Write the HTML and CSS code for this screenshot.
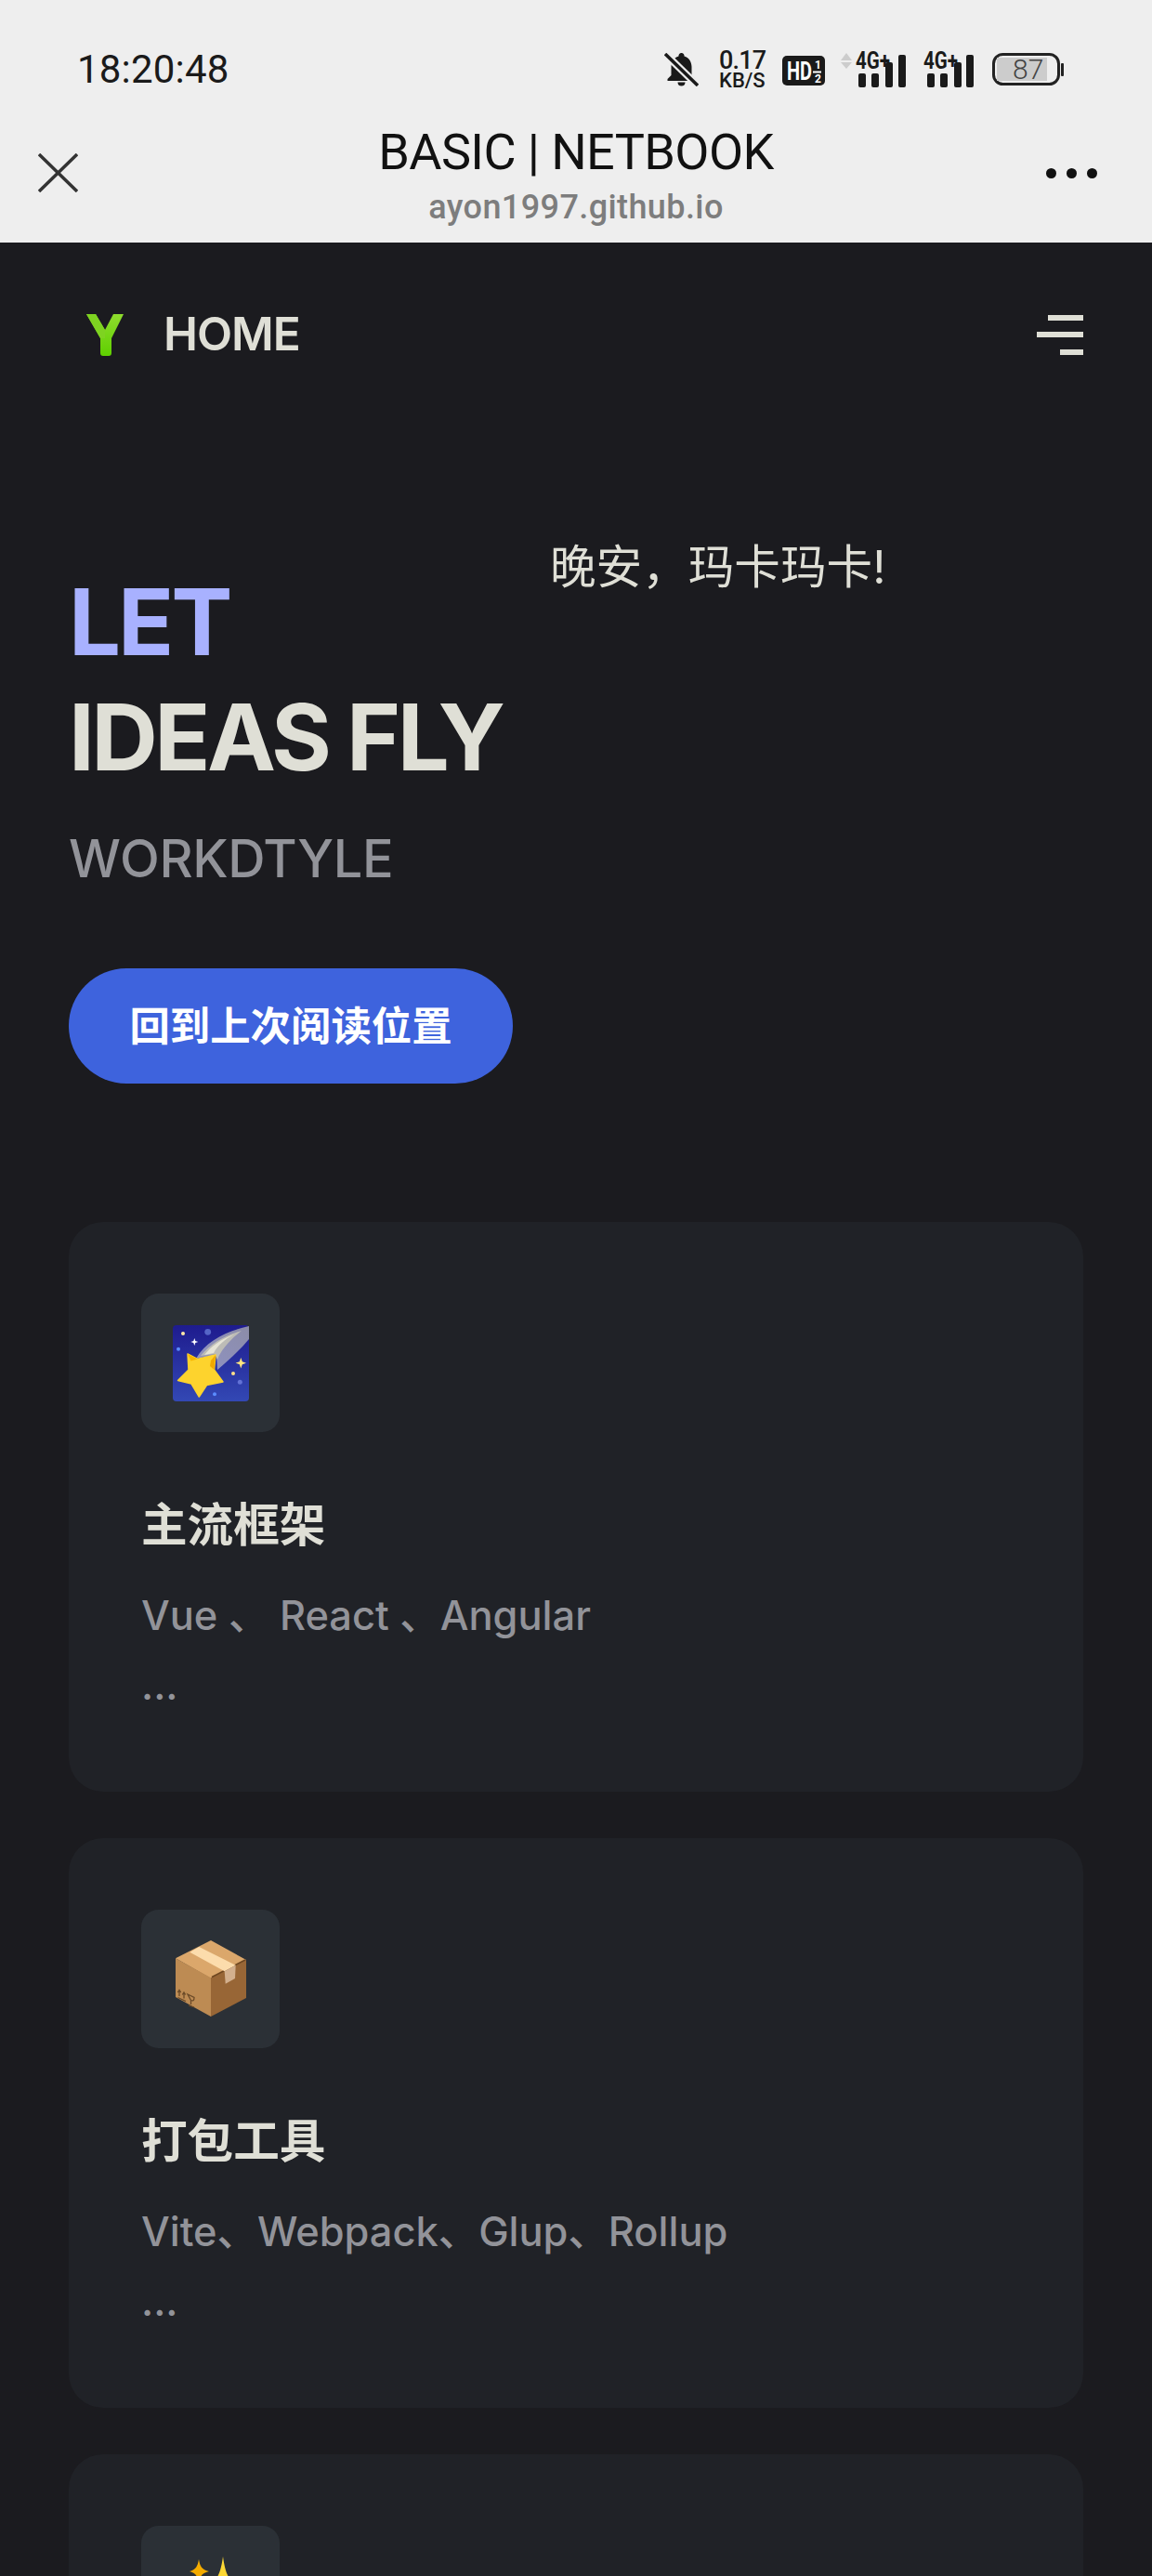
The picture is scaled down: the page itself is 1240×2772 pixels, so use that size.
FILE: index.html
```html
<!DOCTYPE html>
<html lang="zh-CN">
<head>
  <meta charset="UTF-8" />
  <meta name="viewport" content="width=device-width, initial-scale=1.0"/>
  <title>BASIC | NETBOOK</title>
  <link rel="stylesheet" href="styles.css">
</head>
<body>

<div class="browser-top">
  <div class="status-bar">
    <span class="clock">18:20:48</span>
    <div class="status-icons">
      <svg class="bell" width="37" height="36" viewBox="0 0 37 36">
        <path d="M18.5 0a3 3 0 0 1 3 3.4C27 5 29.5 10 29.5 15v9l4 4v2h-30v-2l4-4v-9c0-5 2.500-10 8-11.600A3 3 0 0 1 18.500 0zM14.500 31.500h8a4 4 0 0 1-8 0z" fill="#1a1a1a"/>
        <path d="M1 1l35 34" stroke="#eee" stroke-width="8"/>
        <path d="M1 1l35 34" stroke="#1a1a1a" stroke-width="3.500"/>
      </svg>
      <div class="speed">
        <span class="speed-num">0.17</span>
        <span class="speed-unit">KB/S</span>
      </div>
      <svg class="hd" width="46" height="32" viewBox="0 0 46 32">
        <rect width="46" height="32" rx="5" fill="#1a1a1a"/>
        <text x="5" y="26" class="hd-big" textLength="27" lengthAdjust="spacingAndGlyphs">HD</text>
        <text x="35" y="14" class="hd-small">1</text>
        <rect x="33" y="16.500" width="9" height="2" fill="#fff"/>
        <text x="35" y="29" class="hd-small">2</text>
      </svg>
      <svg class="signal signal-a" width="70" height="44" viewBox="0 -6 70 44">
        <path d="M0 9h12L6 1zM0 11h12L6 18z" fill="#ccc"/>
        <text x="16" y="18" class="net" textLength="37" lengthAdjust="spacingAndGlyphs">4G+</text>
        <rect x="19" y="23" width="8" height="15" rx="2"/>
        <rect x="33" y="23" width="8" height="15" rx="2"/>
        <rect x="48" y="11" width="8" height="27" rx="2"/>
        <rect x="62" y="3" width="8" height="35" rx="2"/>
      </svg>
      <svg class="signal signal-b" width="54" height="44" viewBox="0 -6 54 44">
        <text x="0" y="18" class="net" textLength="37" lengthAdjust="spacingAndGlyphs">4G+</text>
        <rect x="4" y="23" width="8" height="15" rx="2"/>
        <rect x="18" y="23" width="8" height="15" rx="2"/>
        <rect x="33" y="11" width="8" height="27" rx="2"/>
        <rect x="46" y="3" width="8" height="35" rx="2"/>
      </svg>
      <svg class="battery" width="77" height="35" viewBox="0 0 77 35">
        <rect x="1.500" y="1.500" width="70" height="32" rx="10" fill="none" stroke="#222" stroke-width="3"/>
        <rect x="5" y="5" width="54" height="25" fill="#ccc"/>
        <text x="22" y="28" class="batt-num">87</text>
        <rect x="74" y="11" width="3" height="14" rx="1" fill="#222"/>
      </svg>
    </div>
  </div>
  <div class="title-bar">
    <svg class="close" width="43" height="42" viewBox="0 0 43 42">
      <path d="M1 1l41 40M42 1L1 41" stroke="#333" stroke-width="3.500" fill="none"/>
    </svg>
    <div class="title-text">
      <div class="page-title">BASIC | NETBOOK</div>
      <div class="page-url">ayon1997.github.io</div>
    </div>
    <div class="more"><i></i><i></i><i></i></div>
  </div>
</div>

<nav class="nav">
  <a class="brand">
    <svg width="42" height="45" viewBox="0 0 42 45">
      <defs>
        <linearGradient id="ygreen" x1="0" y1="0" x2="0" y2="1">
          <stop offset="0" stop-color="#8fdc2e"/>
          <stop offset="1" stop-color="#5fd000"/>
        </linearGradient>
      </defs>
      <path d="M1 0h10l10 17 9-17h11L28 26v16q0 3-3 3h-6q-3 0-3-3V26z" fill="url(#ygreen)"/>
      <path d="M1 0h10l10 17v9h-5z" fill="#7ed321"/>
    </svg>
    <span class="brand-name">HOME</span>
  </a>
  <div class="burger"><i class="b1"></i><i class="b2"></i><i class="b3"></i></div>
</nav>

<section class="hero">
  <p class="greeting">晚安，玛卡玛卡!</p>
  <h1 class="hero-name">LET</h1>
  <p class="hero-text">IDEAS FLY</p>
  <p class="hero-tag">WORKDTYLE</p>
  <a class="hero-btn">回到上次阅读位置</a>
</section>

<section class="features">
  <article class="card">
    <div class="icon-box">
      <svg width="82" height="82" viewBox="0 0 82 82">
        <defs>
          <linearGradient id="night" x1="0" y1="0" x2="0" y2="1">
            <stop offset="0" stop-color="#1e1b8e"/>
            <stop offset="1" stop-color="#3348b4"/>
          </linearGradient>
          <linearGradient id="trail" x1="1" y1="0" x2="0" y2="1">
            <stop offset="0" stop-color="#8c8ca8"/>
            <stop offset="1" stop-color="#8f93c4"/>
          </linearGradient>
        </defs>
        <rect width="82" height="82" rx="4" fill="url(#night)"/>
        <path d="M82 1C60 6 36 16 25 36l22-4 1 16C60 38 72 27 82 15z" fill="url(#trail)"/>
        <path d="M74 6C56 11 40 20 30 33l15-2 3 6c4-10 12-20 26-31z" fill="#bdbcb6"/>
        <path d="M66 10C52 15 42 22 34 32l10-2c4-8 12-15 22-20z" fill="#e6e4d6"/>
        <circle cx="11" cy="9" r="2" fill="#ffe9a8"/>
        <circle cx="37.700" cy="7.300" r="3.400" fill="#5565c7"/>
        <circle cx="6" cy="25.700" r="2" fill="#5a8cff"/>
        <circle cx="65" cy="52" r="2" fill="#ffe08a"/>
        <circle cx="72.300" cy="61.300" r="2.500" fill="#6272d6"/>
        <circle cx="45" cy="74.300" r="2" fill="#5a8cff"/>
        <path d="M23.300 14l1 3 3 1-3 1-1 3-1-3-3-1 3-1z" fill="#fff"/>
        <path d="M73.300 35l1.500 4.200 4.200 1.500-4.200 1.500-1.500 4.200-1.500-4.200-4.200-1.500 4.200-1.500z" fill="#ffe680"/>
        <path d="M16 31l10.500 5.500L46 32l-1.500 16L54 61l-17.500 3.500L28.300 77 20 63 5.500 59.500 17 48z" fill="#fdd32d" stroke="#fdd32d" stroke-width="1.500" stroke-linejoin="round"/>
        <path d="M46 32l-1.500 16-4.500-4 1-6z" fill="#f0a800"/>
        <path d="M16 31l10.500 5.500-7 2z" fill="#f7b500"/>
      </svg>
    </div>
    <h2 class="card-title">主流框架</h2>
    <p class="card-desc">Vue 、 React 、Angular<br>...</p>
  </article>

  <article class="card">
    <div class="icon-box">
      <svg width="76" height="82" viewBox="0 0 76 82">
        <path d="M38 0l38 21-38 20L0 19.300z" fill="#dba76b"/>
        <path d="M0 19.300l38 21V82L0 61z" fill="#bd8b53"/>
        <path d="M38 40.300L76 21v41L38 82z" fill="#986636"/>
        <path d="M39 39.500L75 21" stroke="#6e4620" stroke-width="1.500"/>
        <path d="M15.300 12.700L25.300 7l39.400 19.700-12 6.600z" fill="#fcdcac"/>
        <path d="M52.700 33.300l12-6.600-.7 14.300-10.300 5.700z" fill="#d3b08e"/>
        <g stroke="#6b4a28" stroke-width="1.300" fill="none">
          <path d="M4 60V54M2.300 56L4 53.500 5.700 56M9 62.500V56.500M7.300 58.500L9 56 10.700 58.500M2.500 61.500L11 65.500"/>
          <path d="M13 58l7 3.500c0 3-1 4-3.500 3zM16.500 65v4M14 70l6 2"/>
        </g>
      </svg>
    </div>
    <h2 class="card-title">打包工具</h2>
    <p class="card-desc">Vite、Webpack、Glup、Rollup<br>...</p>
  </article>

  <article class="card">
    <div class="icon-box">
      <svg width="82" height="82" viewBox="0 0 82 82">
        <path d="M28 3c1.500 8 3 11 11 13-8 2-9.500 5-11 13-1.500-8-3-11-10-13 7-2 8.500-5 10-13z" fill="#f5ac00"/>
        <path d="M54 0c3 22 8 30 24 34-16 4-21 12-24 34-3-22-8-30-24-34 16-4 21-12 24-34z" fill="#fdd835"/>
      </svg>
    </div>
  </article>
</section>

</body>
</html>
```

FILE: styles.css
```css
* {
  box-sizing: border-box;
}
html, body {
  margin: 0;
  height: 2772px;
  overflow: hidden;
}
body {
  width: 1240px;
  background-color: #1b1b1f;
  color: #dfdfd6;
  font-family: Inter, "Noto Sans CJK SC", sans-serif;
}
p, h1, h2 {
  margin: 0;
}

/* phone chrome */
.browser-top {
  height: 261px;
  background-color: #eee;
  font-family: Roboto, sans-serif;
  color: #111;
}
.status-bar {
  height: 131px;
  padding: 18px 95px 0 83px;
  display: flex;
  align-items: center;
  justify-content: space-between;
}
.clock {
  font-size: 42px;
  line-height: 42px;
  letter-spacing: 0.2px;
  color: #1a1a1a;
}
.status-icons {
  display: flex;
  align-items: center;
  gap: 19px;
}
.status-icons svg {
  display: block;
  fill: #1a1a1a;
}
.speed {
  display: flex;
  flex-direction: column;
  margin-left: 3px;
  width: 49px;
  color: #1a1a1a;
  font-weight: 500;
}
.speed-num {
  font-size: 27px;
  line-height: 25px;
  letter-spacing: -0.8px;
}
.speed-unit {
  font-size: 22px;
  line-height: 18px;
}
.hd {
  margin-top: 2px;
}
.hd-big {
  font: 700 28px Roboto, sans-serif;
  fill: #fff;
}
.hd-small {
  font: 700 12px Roboto, sans-serif;
  fill: #fff;
}
.signal {
  margin-top: -6px;
}
.signal-a {
  margin-left: -2px;
}
.net {
  font: 700 25px Roboto, sans-serif;
}
.battery {
  margin-left: 1px;
}
.batt-num {
  font: 300 30px Roboto, sans-serif;
  fill: #444;
}
.title-bar {
  height: 130px;
  padding: 0 41px 20px;
  display: grid;
  grid-template-columns: 1fr auto 1fr;
  align-items: center;
  align-content: center;
}
.close {
  display: block;
}
.title-text {
  margin-top: 5px;
  text-align: center;
}
.page-title {
  font-size: 54px;
  line-height: 64px;
  letter-spacing: -0.6px;
}
.page-url {
  margin-top: 5px;
  font-size: 36px;
  line-height: 44px;
  letter-spacing: 0.4px;
  color: #7d7d7d;
  font-weight: 500;
}
.more {
  justify-self: end;
  display: flex;
  gap: 11px;
  margin-right: 18px;
}
.more i {
  width: 11px;
  height: 11px;
  border-radius: 50%;
  background-color: #111;
}

/* site nav */
.nav {
  height: 198px;
  padding: 0 74px 0 92px;
  display: flex;
  align-items: center;
  justify-content: space-between;
}
.brand {
  display: flex;
  align-items: center;
  gap: 42px;
  font-size: 49.600px;
  font-weight: 600;
}
.brand-name {
  margin-top: -3px;
  letter-spacing: -1px;
}
.brand svg {
  display: block;
}
.burger {
  width: 50px;
  display: flex;
  flex-direction: column;
  align-items: flex-end;
  gap: 12.500px;
}
.burger i {
  display: block;
  height: 6px;
  background-color: #dfdfd6;
}
.b1 { width: 38px; }
.b2 { width: 50px; }
.b3 { width: 25px; }

/* hero */
.hero {
  padding: 124px 74px 0;
}
.greeting {
  margin: 2px 0 -28px 518px;
  font-size: 49.600px;
  line-height: 50px;
  font-weight: 400;
  white-space: nowrap;
}
.hero-name, .hero-text {
  font-size: 99.200px;
  line-height: 124px;
  font-weight: 750;
}
.hero-name {
  color: #a8b1ff;
  letter-spacing: -3px;
}
.hero-text {
  letter-spacing: -3.600px;
}
.hero-tag {
  padding-top: 25px;
  font-size: 55.800px;
  line-height: 87px;
  font-weight: 500;
  letter-spacing: -0.400px;
  color: #929399;
}
.hero-btn {
  display: block;
  width: 478px;
  height: 124px;
  margin-top: 75px;
  border-radius: 62px;
  background-color: #3e63dd;
  color: #fff;
  text-align: center;
  font-size: 43.400px;
  line-height: 124px;
  font-weight: 700;
}

/* feature cards */
.features {
  height: 1606px;
  overflow: hidden;
  padding: 149px 74px 0;
  display: flex;
  flex-direction: column;
  gap: 49.600px;
}
.card {
  flex: none;
  height: 613.400px;
  padding: 77px 78px;
  border-radius: 37px;
  background-color: #202227;
}
.icon-box {
  width: 149px;
  height: 149px;
  border-radius: 18.600px;
  background-color: #2b3036;
  display: flex;
  align-items: center;
  justify-content: center;
}
.icon-box svg {
  display: block;
}
.card-title {
  margin-top: 63px;
  font-size: 49.600px;
  line-height: 74.400px;
  font-weight: 700;
}
.card-desc {
  margin-top: 23px;
  font-size: 43.400px;
  line-height: 74.400px;
  font-weight: 500;
  color: #929399;
}
```
